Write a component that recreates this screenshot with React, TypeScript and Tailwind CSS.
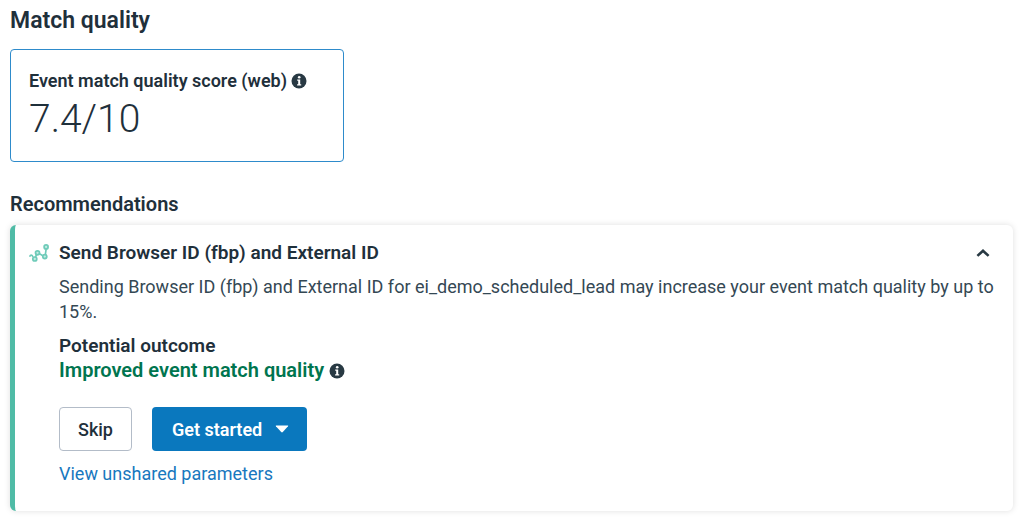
import { useState } from "react";

function InfoIcon() {
  return (
    <svg viewBox="0 0 16 16" className="size-4 shrink-0" aria-hidden="true">
      <circle cx="8" cy="8" r="7.5" fill="#283943" />
      <circle cx="8.2" cy="4.3" r="1.3" fill="#fff" />
      <path d="M6.2 6.6h3v4.6h1v1.2H6.1v-1.2h1.1V7.8h-1z" fill="#fff" />
    </svg>
  );
}

function TrendIcon() {
  return (
    <svg viewBox="0 0 20 18" className="h-[18px] w-5 shrink-0" fill="none" stroke="#6fcbb9" strokeWidth="1.7" aria-hidden="true">
      <path d="M.6 12.8C1.4 10.6 3 10.6 4 13M6.4 13.4l1.2-3M10.4 9.6l3.4 2.2M16.3 11l.9-6.4" />
      <circle cx="5.8" cy="15" r="2" fill="#c3ebe3" />
      <circle cx="8.5" cy="8.8" r="2" fill="#c3ebe3" />
      <circle cx="15.8" cy="12.6" r="2" fill="#c3ebe3" />
      <circle cx="17.1" cy="2.9" r="2" fill="#c3ebe3" />
    </svg>
  );
}

function ScoreCard() {
  return (
    <section className="w-full max-w-[334px] rounded border border-[#2e8bcb] px-[18px] pt-[19px] pb-[18px]">
      <h3 className="flex items-center gap-1 text-[18px] leading-6 font-semibold">
        Event match quality score (web)
        <InfoIcon />
      </h3>
      <p className="pt-[2px] text-[39px] leading-12 font-[350]">7.4/10</p>
    </section>
  );
}

function Recommendation() {
  const [open, setOpen] = useState(true);
  return (
    <section className="flex rounded-md border-l-[5px] border-[#4fbba6] bg-white pt-4 pr-5 pb-6 pl-[14px] shadow-[0_0_6px_rgba(0,0,0,0.13)]">
      <div className="flex h-6 w-[30px] shrink-0 items-center">
        <TrendIcon />
      </div>
      <div className="min-w-0 flex-1">
        <div className="flex items-center justify-between">
          <h3 className="text-[19px] leading-6 font-semibold">Send Browser ID (fbp) and External ID</h3>
          <button type="button" aria-label="Toggle details" aria-expanded={open} onClick={() => setOpen(!open)} className="flex h-6 w-5 items-center justify-center">
            <svg viewBox="0 0 14 9" className={open ? "h-[9px] w-3.5" : "h-[9px] w-3.5 rotate-180"} fill="none" stroke="#283943" strokeWidth="2.6" aria-hidden="true">
              <path d="M1.4 6.9 7 1.8l5.6 5.1" />
            </svg>
          </button>
        </div>
        {open && (
          <>
            <p className="-mr-1 mt-[9px] text-[18px] leading-[25px] text-[#344854]">
              Sending Browser ID (fbp) and External ID for ei_demo_scheduled_lead may increase your event match quality by up to 15%.
            </p>
            <h4 className="mt-[9px] text-[19px] leading-[25px] font-semibold">Potential outcome</h4>
            <p className="flex items-center gap-[5px] text-[20px] leading-[25px] font-semibold text-[#00754f]">
              Improved event match quality
              <InfoIcon />
            </p>
            <div className="mt-6 flex gap-5">
              <button type="button" className="h-11 rounded border border-[#b3bcc8] px-[18px] text-[18px] font-medium">
                Skip
              </button>
              <button type="button" className="flex h-11 items-center gap-[13px] rounded bg-[#0a78be] pr-[18px] pl-5 text-[18px] font-semibold text-white">
                Get started
                <svg viewBox="0 0 14 8" className="h-2 w-3.5" aria-hidden="true">
                  <path d="M1.2.5h11.6q.8 0 .2.7L7.8 7.1q-.8.8-1.6 0L.9 1.2Q.4.5 1.2.5" fill="#fff" />
                </svg>
              </button>
            </div>
            <a href="#parameters" className="mt-[10px] inline-block text-[18px] leading-[25px] text-[#1878be]">
              View unshared parameters
            </a>
          </>
        )}
      </div>
    </section>
  );
}

export default function App() {
  return (
    <main className="bg-white pt-[9px] pr-[11px] pb-[7px] pl-[10px] font-['Roboto','Noto_Sans',sans-serif] text-[#1f303b]">
      <h2 className="text-[23px] leading-6 font-semibold">Match quality</h2>
      <div className="mt-4">
        <ScoreCard />
      </div>
      <h2 className="mt-[30px] mb-[9px] text-[20px] leading-6 font-semibold">Recommendations</h2>
      <Recommendation />
    </main>
  );
}
